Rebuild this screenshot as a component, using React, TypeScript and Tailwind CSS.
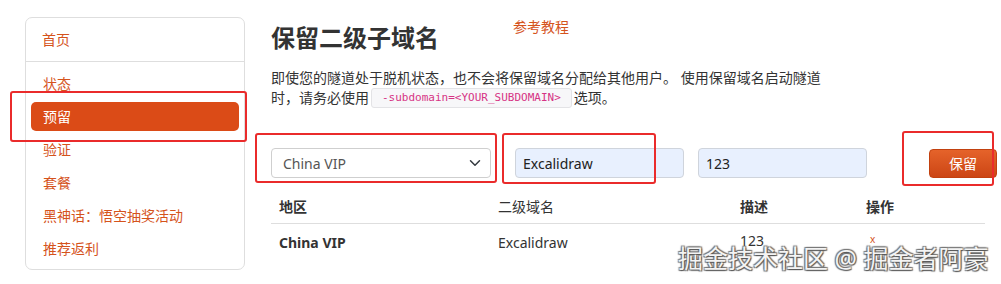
import React from 'react';

const navItems = ['状态', '预留', '验证', '套餐', '黑神话：悟空抽奖活动', '推荐返利'];

const Sidebar: React.FC = () => (
  <aside className="w-[220px] h-[253px] mt-[17px] ml-[25px] flex-shrink-0 rounded-[7px] border border-[#dedede] bg-white">
    <div className="h-[44px] border-b border-[#dedede] pl-[16px] flex items-center text-[14px] text-[#d5531c]">首页</div>
    <ul className="px-[5px] pt-[7px] flex flex-col gap-[4px]">
      {navItems.map((item) => (
        <li
          key={item}
          className={
            item === '预留'
              ? 'h-[29px] pl-[12px] flex items-center rounded-[5px] bg-[#db4b17] text-[14px] text-white'
              : 'h-[29px] pl-[12px] flex items-center text-[14px] text-[#d5531c]'
          }
        >
          {item}
        </li>
      ))}
    </ul>
  </aside>
);

const ChevronDown: React.FC = () => (
  <svg width="12" height="12" viewBox="0 0 16 16" fill="none" stroke="#343a40" strokeWidth="2" strokeLinecap="round" strokeLinejoin="round">
    <path d="M2 5l6 6 6-6" />
  </svg>
);

const RedBox: React.FC<{ className: string }> = ({ className }) => (
  <div className={`absolute border-2 border-[#ea2b2b] rounded-[3px] pointer-events-none ${className}`} />
);

const App: React.FC = () => {
  return (
    <div
      className="relative w-[1001px] h-[284px] bg-white overflow-hidden flex"
      style={{ fontFamily: '"Noto Sans", "Noto Sans CJK SC", sans-serif' }}
    >
      <Sidebar />

      <main className="ml-[26px] pt-[21px] w-[727px] text-[#333]">
        <div className="flex items-start">
          <h1 className="text-[24px] leading-[34px] font-bold text-[#333]">保留二级子域名</h1>
          <a className="ml-[74px] -mt-[3px] text-[14px] leading-[18px] text-[#d5531c]">参考教程</a>
        </div>

        <p className="mt-[13px] text-[14px] leading-[20px] text-[#333] w-[600px]">
          即使您的隧道处于脱机状态，也不会将保留域名分配给其他用户。 使用保留域名启动隧道
          <br />
          时，请务必使用
          <code
            className="mx-[2px] inline-block h-[20px] px-[10px] align-top rounded-[3px] border border-[#e3e3e6] bg-[#f7f7f9] text-[11px] leading-[18px] text-[#d63384]"
            style={{ fontFamily: '"DejaVu Sans Mono", "Liberation Mono", monospace' }}
          >
            -subdomain=&lt;YOUR_SUBDOMAIN&gt;
          </code>
          选项。
        </p>

        <div className="mt-[40px] flex items-center h-[30px]">
          <div className="w-[220px] h-[30px] rounded-[4px] border border-[#cfcfcf] bg-white flex items-center justify-between pl-[11px] pr-[9px] text-[14px] text-[#555]">
            <span>China VIP</span>
            <ChevronDown />
          </div>
          <div className="ml-[24px] w-[169px] h-[30px] rounded-[4px] border border-[#cfd4dc] bg-[#e8f0fe] flex items-center pl-[7px] text-[14px] text-[#222]">
            Excalidraw
          </div>
          <div className="ml-[14px] w-[169px] h-[30px] rounded-[4px] border border-[#cfd4dc] bg-[#e8f0fe] flex items-center pl-[7px] text-[14px] text-[#222]">
            123
          </div>
          <button className="ml-[62px] w-[68px] h-[29px] rounded-[4px] bg-gradient-to-b from-[#e5632a] to-[#cc4514] text-[14px] text-white border border-[#c2410f]">
            保留
          </button>
        </div>

        <div className="mt-[12px] w-[714px]">
          <div className="grid grid-cols-[219px_242px_126px_1fr] h-[34px] items-center border-b border-[#dedede] pl-[8px] text-[14px] font-bold text-[#333]">
            <span>地区</span>
            <span className="font-normal">二级域名</span>
            <span>描述</span>
            <span>操作</span>
          </div>
          <div className="grid grid-cols-[219px_242px_126px_1fr] h-[36px] items-center pl-[8px] text-[14px] text-[#333]">
            <span className="font-bold">China VIP</span>
            <span>Excalidraw</span>
            <span className="-mt-[4px]">123</span>
            <span className="pl-[4px] -mt-[6px] text-[10px] text-[#d5531c]">x</span>
          </div>
        </div>
      </main>

      <RedBox className="left-[10px] top-[91px] w-[237px] h-[51px]" />
      <RedBox className="left-[255px] top-[133px] w-[242px] h-[50px]" />
      <RedBox className="left-[502px] top-[133px] w-[154px] h-[51px]" />
      <RedBox className="left-[902px] top-[131px] w-[92px] h-[55px]" />

      <div
        className="absolute left-[678px] top-[240px] text-[25px] leading-[36px] text-[#f4f4f4] whitespace-nowrap"
        style={{ textShadow: '1px 1px 1px #555, -1px -1px 1px #777, 1px -1px 1px #777, -1px 1px 1px #777' }}
      >
        掘金技术社区 @ 掘金者阿豪
      </div>
    </div>
  );
};

export default App;
